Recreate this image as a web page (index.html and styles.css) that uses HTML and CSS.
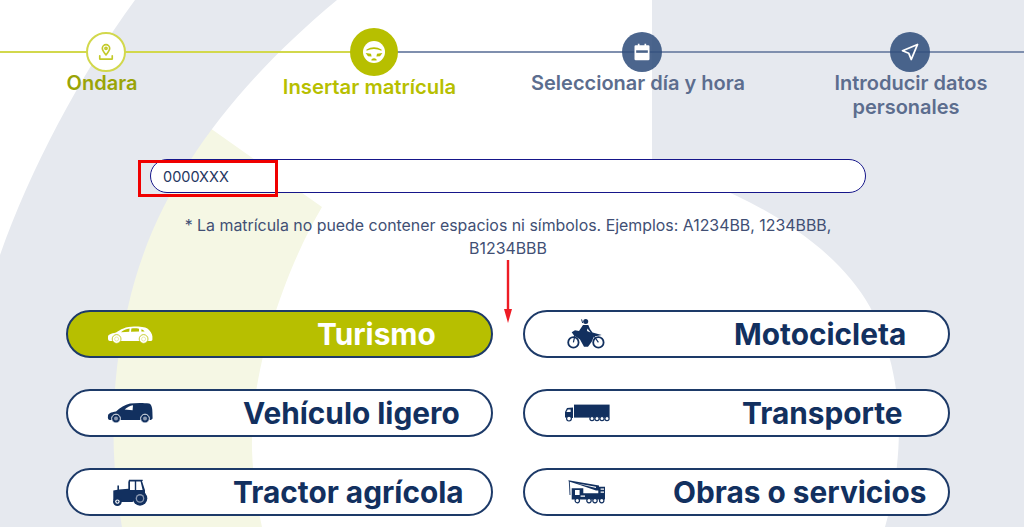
FILE: index.html
```html
<!DOCTYPE html>
<html lang="es">
<head>
<meta charset="utf-8">
<title>Insertar matrícula</title>
<link rel="stylesheet" href="styles.css">
</head>
<body>
<div class="page">
  <svg class="backdrop" viewBox="0 0 1024 527" aria-hidden="true">
    <path class="bg-yellow" d="M210,128 L322,207 C285,270 250,370 252,450 C253,480 257,505 262,527 L100,527 L100,300 Z"/>
    <path class="bg-grey" d="M135,0 L337,0 C235,85 155,185 128,307 C112,370 108,450 122,527 L0,527 L0,255 C30,170 80,75 135,0 Z"/>
    <path class="bg-grey" d="M652,0 H1024 V527 H885 C915,420 890,345 870,307 C830,235 730,185 652,165 Z"/>
  </svg>

  <div class="content">
    <nav class="stepper">
      <div class="line line-done"></div>
      <div class="line line-todo"></div>

      <div class="step step-done">
        <div class="dot">
          <svg viewBox="0 0 24 24" width="20" height="20" fill="none" stroke="currentColor" stroke-width="2" stroke-linecap="round" stroke-linejoin="round"><path d="M12 15.5 C9 12 7.6 10 7.6 7.6 A4.4 4.4 0 0 1 16.4 7.6 C16.4 10 15 12 12 15.5 Z"/><circle cx="12" cy="7.6" r="1.3"/><path d="M4.5 16.5 V20.5 H19.5 V16.5"/></svg>
        </div>
        <div class="step-label">Ondara</div>
      </div>

      <div class="step step-active">
        <div class="dot">
          <svg viewBox="0 0 24 24" width="24" height="24"><circle cx="12" cy="12" r="11" fill="currentColor"/><path fill="#b7bf00" d="M4.5 9.4 Q12 5 19.5 9.4 L19.5 10.8 Q12 7.2 4.5 10.8 Z M3.6 13 L9 13.8 L9.6 16.6 L6 16.2 Z M20.4 13 L15 13.8 L14.4 16.6 L18 16.2 Z M9.4 19.4 Q12 17.2 14.6 19.4 L14.6 20.4 H9.4 Z"/></svg>
        </div>
        <div class="step-label">Insertar matrícula</div>
      </div>

      <div class="step step-todo">
        <div class="dot">
          <svg viewBox="0 0 24 24" width="20" height="20"><path fill="currentColor" d="M7 2 H9 V4 H15 V2 H17 V4 H19.5 A1.5 1.5 0 0 1 21 5.5 V20.5 A1.5 1.5 0 0 1 19.5 22 H4.5 A1.5 1.5 0 0 1 3 20.5 V5.5 A1.5 1.5 0 0 1 4.5 4 H7 Z"/><rect x="5" y="10" width="14" height="3" fill="#4a6389"/></svg>
        </div>
        <div class="step-label">Seleccionar día y hora</div>
      </div>

      <div class="step step-todo step-last">
        <div class="dot">
          <svg viewBox="0 0 24 24" width="20" height="20" fill="none" stroke="currentColor" stroke-width="2.2" stroke-linejoin="round"><path d="M21 3 L3 10.5 L10.5 13.5 L13.5 21 Z"/></svg>
        </div>
        <div class="step-label">Introducir datos personales</div>
      </div>
    </nav>

    <section class="plate">
      <div class="plate-input">0000XXX</div>
      <div class="red-box"></div>
      <p class="plate-note">* La matrícula no puede contener espacios ni símbolos. Ejemplos: A1234BB, 1234BBB, B1234BBB</p>
      <svg class="red-arrow" viewBox="0 0 10 64" width="10" height="64" aria-hidden="true"><path d="M5 0 V54" stroke="#ee1c25" stroke-width="2.4" fill="none"/><path d="M1 49 H9 L5 63 Z" fill="#ee1c25"/></svg>
    </section>

    <section class="vehicles">
      <button class="vehicle vehicle-selected">
        <svg class="vehicle-icon" viewBox="0 0 46 20" width="46" height="20"><path fill="#fff" d="M1 13 C1 10.6 4 9.6 9 8.6 C13 5.4 19 2.4 27 2.4 C33 2.4 38 2.8 40.4 4.4 C43 6.6 45.4 9.6 45.4 12.6 L45.4 15.4 C45.4 16.4 44.4 17 43 17 L3 17 C1.6 17 0.8 16 1 13 Z"/><path fill="#b7bf00" d="M14 8.2 C16.5 6.4 19 5.2 22.6 4.6 L22.2 7.8 Z M24.4 4.5 C27 4.2 30 4.3 32 4.7 L32 7.4 L24 7.8 Z M34.4 5.2 C35.6 5.6 36.8 6.4 37.6 7.4 L34.4 7.4 Z"/><circle cx="9.6" cy="15" r="4.4" fill="#fff" stroke="#b7bf00" stroke-width=".8"/><circle cx="36.6" cy="15" r="4.4" fill="#fff" stroke="#b7bf00" stroke-width=".8"/><circle cx="9.6" cy="15" r="2" fill="none" stroke="#dfe38a" stroke-width=".7"/><circle cx="36.6" cy="15" r="2" fill="none" stroke="#dfe38a" stroke-width=".7"/></svg>
        <span class="vehicle-label label-turismo">Turismo</span>
      </button>

      <button class="vehicle vehicle-moto">
        <svg class="vehicle-icon" viewBox="0 0 40 32" width="40" height="32"><circle cx="7.4" cy="24.4" r="5.2" fill="#fff" stroke="#12305f" stroke-width="1.8"/><circle cx="32.4" cy="24.4" r="5.2" fill="#fff" stroke="#12305f" stroke-width="1.8"/><path fill="#12305f" d="M5.7 14.3 L9 12.2 L13 13 L17 7 L22.3 7 L24 11 L26.5 14.5 L35.7 17 L28 18.5 L25.7 23.7 L22 28.7 L18 28.7 L14 21.5 L8 17.5 Z"/><circle cx="19.7" cy="3.6" r="2.5" fill="#12305f"/><path d="M16.6 5 L15.6 1.4" stroke="#12305f" stroke-width="1" fill="none"/><path fill="#fff" d="M21.4 10.6 L24.6 14.6 L21 13 Z"/><path d="M9 17 L7.4 24.4 M28 18 L32.4 24.4" stroke="#12305f" stroke-width="1.2" fill="none"/></svg>
        <span class="vehicle-label label-moto">Motocicleta</span>
      </button>

      <button class="vehicle">
        <svg class="vehicle-icon" viewBox="0 0 46 22" width="46" height="22"><path fill="#12305f" d="M1 14 C1 11.6 4 10.4 9 9.6 C13 6 18 2.6 23 1.6 C29 0.8 37 0.8 42 1.6 C44 2 45.4 5 45.4 10 L45.6 16.6 L44 18 L3 18 C1 18 0.6 16 1 14 Z"/><path fill="#fff" d="M17.6 7.6 C20 5.4 23 3.6 26 3.2 L25.6 8.2 Z"/><circle cx="9" cy="16.6" r="4.4" fill="#12305f" stroke="#fff" stroke-width=".9"/><circle cx="9" cy="16.6" r="2" fill="#8a98b0"/><circle cx="38" cy="16.6" r="4.4" fill="#12305f" stroke="#fff" stroke-width=".9"/><circle cx="38" cy="16.6" r="2" fill="#8a98b0"/></svg>
        <span class="vehicle-label label-ligero">Vehículo ligero</span>
      </button>

      <button class="vehicle vehicle-truck">
        <svg class="vehicle-icon" viewBox="0 0 46 18" width="46" height="18"><rect x="10" y="0.6" width="35.6" height="13" fill="#12305f"/><path fill="#12305f" d="M1 13.5 L1 8 L3 4 L9 3.6 L9 14 Z"/><path fill="#fff" d="M2.4 8 L3.8 5.4 L6.6 5.4 L6.6 8 Z"/><circle cx="5" cy="14.6" r="2.4" fill="#fff" stroke="#12305f" stroke-width="1.2"/><circle cx="28" cy="14.6" r="2.1" fill="#fff" stroke="#12305f" stroke-width="1.2"/><circle cx="33" cy="14.6" r="2.1" fill="#fff" stroke="#12305f" stroke-width="1.2"/><circle cx="38" cy="14.6" r="2.1" fill="#fff" stroke="#12305f" stroke-width="1.2"/><circle cx="43" cy="14.6" r="2.1" fill="#fff" stroke="#12305f" stroke-width="1.2"/></svg>
        <span class="vehicle-label label-truck">Transporte</span>
      </button>

      <button class="vehicle vehicle-tractor">
        <svg class="vehicle-icon" viewBox="0 0 36 27" width="36" height="27"><path fill="#12305f" d="M1.3 11.6 L5.4 10.8 L5.4 6.6 L7 6.6 L7 10.6 L16.3 9.7 L16.3 3 L17 0.7 L30.7 0.7 L30.7 2 L30 2 L33 11.3 L33 14 L24 14 L20.7 23 L9 23 L5 19 L1.3 21.3 Z"/><path fill="#fff" d="M18 2.4 H22.8 V11 H18 Z M24.2 2.4 H28.6 L30.6 11 H24.2 Z"/><circle cx="28" cy="19.4" r="7.3" fill="#12305f"/><circle cx="28" cy="19.4" r="4.3" fill="#8a98b0"/><circle cx="28" cy="19.4" r="3" fill="#12305f"/><circle cx="5.4" cy="22.6" r="4.4" fill="#12305f"/><circle cx="5.4" cy="22.6" r="2.2" fill="#fff"/><circle cx="5.4" cy="22.6" r="1.1" fill="#12305f"/></svg>
        <span class="vehicle-label label-tractor">Tractor agrícola</span>
      </button>

      <button class="vehicle vehicle-crane">
        <svg class="vehicle-icon" viewBox="0 0 40 24" width="40" height="24"><path d="M1.3 1 L2 15" stroke="#12305f" stroke-width=".9" fill="none"/><path fill="#12305f" d="M0.3 0.2 L31 5.4 L31 10.4 L28 10.4 L12 5 L1 1.6 Z"/><path fill="#fff" d="M8 3.2 L28 6.8 L28 8 Z"/><path fill="#12305f" d="M3.7 19.6 L3.7 8.3 L15.3 8.3 L15.3 13.3 L30.3 13.3 L30.3 6.7 L37 6.7 L37 19.6 Z"/><path fill="#fff" d="M7 10 H11.6 V15 H7 Z M12.6 15.6 H17 V16.8 H12.6 Z M32.6 8.6 H36 V9.8 H32.6 Z M32.6 11.6 H36 V12.8 H32.6 Z"/><circle cx="9.3" cy="20.6" r="2.2" fill="#fff" stroke="#12305f" stroke-width="1.2"/><circle cx="21" cy="20.6" r="2.2" fill="#fff" stroke="#12305f" stroke-width="1.2"/><circle cx="27" cy="20.6" r="2.2" fill="#fff" stroke="#12305f" stroke-width="1.2"/><circle cx="33.7" cy="20.6" r="2.2" fill="#fff" stroke="#12305f" stroke-width="1.2"/></svg>
        <span class="vehicle-label label-crane">Obras o servicios</span>
      </button>
    </section>
  </div>
</div>
</body>
</html>
```

FILE: styles.css
```css
* { box-sizing: border-box; }

html, body {
  margin: 0;
  padding: 0;
  background: #fff;
}

.page {
  position: relative;
  width: 1024px;
  height: 527px;
  overflow: hidden;
  font-family: "Inter", "Liberation Sans", sans-serif;
}

.backdrop {
  position: absolute;
  inset: 0;
  width: 1024px;
  height: 527px;
}
.bg-grey { fill: #e6e9ef; }
.bg-yellow { fill: #f5f7e4; }

.content {
  position: relative;
}

/* Stepper */
.stepper {
  position: relative;
  display: grid;
  grid-template-columns: repeat(4, 268px);
  margin-left: -32px;
  width: 1072px;
  padding-top: 28px;
  height: 119px;
}
.line {
  position: absolute;
  top: 51px;
  height: 2px;
}
.line-done { left: 32px; width: 372px; background: #d2d84c; }
.line-todo { left: 404px; width: 652px; background: #7f8fae; }

.step {
  position: relative;
  display: flex;
  flex-direction: column;
  align-items: center;
  text-align: center;
  font-size: 20px;
  font-weight: 600;
  line-height: 24px;
}
.dot {
  display: flex;
  align-items: center;
  justify-content: center;
  width: 40px;
  height: 40px;
  margin: 4px 0 -1px 8px;
  border-radius: 50%;
  flex: none;
}
.step-done .dot {
  background: #fff;
  border: 2px solid #d2d84c;
  color: #c3ca2a;
}
.step-done .step-label { color: #9aa406; }
.step-active .dot {
  width: 48px;
  height: 48px;
  margin-top: 0;
  background: #b7bf00;
  color: #fff;
}
.step-active .step-label {
  color: #b7bf00;
  font-size: 20.3px;
  margin-left: -1px;
}
.step-todo .dot {
  background: rgba(50, 80, 125, 0.88);
  color: #fff;
}
.step-todo .step-label { color: #5c6d8e; }
.step-last .step-label {
  width: 180px;
  text-indent: 10px;
}

/* Plate input */
.plate {
  position: relative;
  margin-top: 40px;
  padding-left: 150px;
}
.plate-input {
  width: 716px;
  height: 34px;
  padding-left: 12px;
  background: #fff;
  border: 1px solid #16168a;
  border-radius: 17px;
  color: #25375f;
  font-size: 14.5px;
  line-height: 33px;
}
.red-box {
  position: absolute;
  left: 138px;
  top: 1px;
  width: 140px;
  height: 37px;
  border: 3px solid #f00000;
}
.plate-note {
  width: 716px;
  margin: 21px 0 0;
  padding: 0 30px;
  color: #414f74;
  font-size: 15.9px;
  line-height: 23px;
  text-align: center;
}
.red-arrow {
  position: absolute;
  left: 503px;
  top: 101px;
}

/* Vehicle buttons */
.vehicles {
  display: grid;
  grid-template-columns: 427px 427px;
  column-gap: 30px;
  row-gap: 31px;
  margin: 50px 0 0 66px;
}
.vehicle {
  display: flex;
  align-items: center;
  width: 427px;
  height: 48px;
  padding: 0 0 0 39px;
  background: #fff;
  border: 2px solid #1d3a68;
  border-radius: 24px;
  color: #12305f;
  font-family: inherit;
  font-size: 29.8px;
  font-weight: 700;
  line-height: 44px;
  white-space: nowrap;
}
.vehicle-icon { flex: none; display: block; }
.vehicle-selected { background: #b7bf00; color: #fff; }
.vehicle-tractor { padding-left: 44px; }
.vehicle-moto { padding-left: 41px; }
.vehicle-truck { padding-left: 39px; }
.vehicle-crane { padding-left: 43px; }

.label-turismo { margin-left: 164px; }
.label-ligero { margin-left: 90px; }
.label-tractor { margin-left: 85px; }
.label-moto { margin-left: 128px; }
.label-truck { margin-left: 132px; }
.label-crane { margin-left: 65px; }
```
